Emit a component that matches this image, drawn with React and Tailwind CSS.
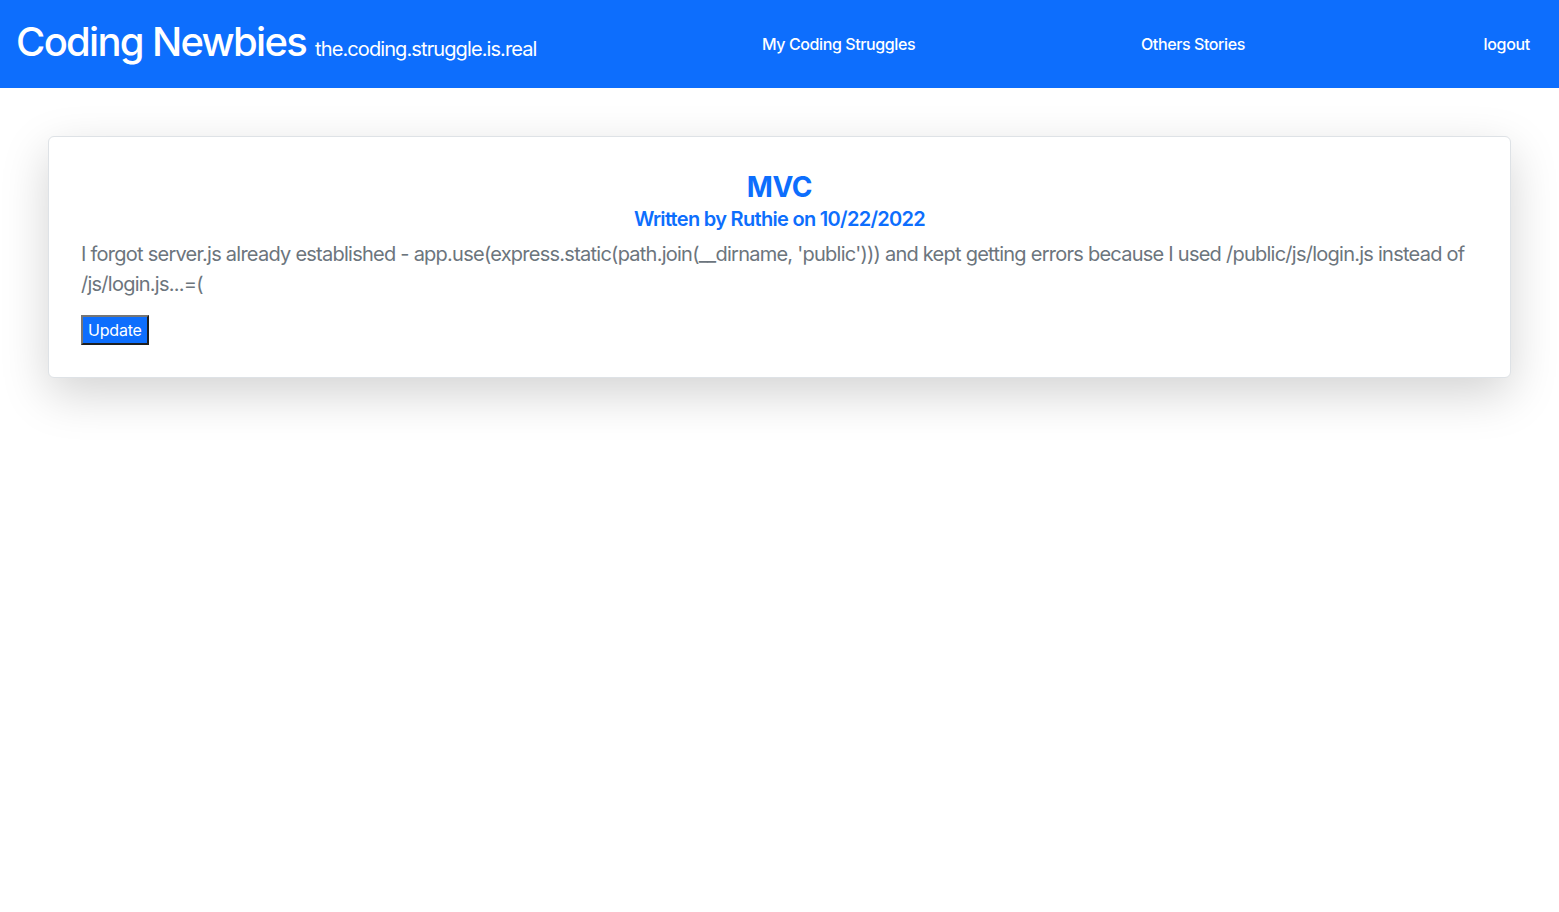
export default function App() {
  return (
    <div className="min-h-screen bg-white font-['Inter','Noto_Sans',sans-serif]">
      {/* Header */}
      <header className="h-[88px] bg-[#0d6efd] text-white flex items-center pl-4 pr-[29px]">
        <div className="w-[746px] pb-[5px] flex items-baseline gap-[9px] shrink-0">
          <h1 className="text-[40px] font-medium leading-tight tracking-[-1.7px]">Coding Newbies</h1>
          <span className="text-[20px] tracking-[-0.9px]">the.coding.struggle.is.real</span>
        </div>
        <nav className="flex-1 flex items-center text-[16px] font-medium">
          <a className="w-[379px] shrink-0 tracking-[-0.4px]">My Coding Struggles</a>
          <a className="tracking-[-0.4px]">Others Stories</a>
          <a className="ml-auto tracking-[-0.3px]">logout</a>
        </nav>
      </header>

      {/* Post */}
      <main className="px-12 pt-12">
        <div className="bg-white border border-[#dee2e6] rounded-md shadow-[0_1rem_3rem_rgba(0,0,0,0.175)] p-8">
          <h3 className="mt-[2px] text-center text-[28px] font-bold leading-[1.2] text-[#0d6efd] tracking-[-0.4px]">MVC</h3>
          <p className="mt-[2px] text-center text-[20px] font-semibold leading-[1.2] text-[#0d6efd] tracking-[-0.7px]">
            Written by Ruthie on 10/22/2022
          </p>
          <p className="mt-2 text-[20px] leading-[1.5] text-[#6c757d] tracking-[-0.75px]">
            I forgot server.js already established - app.use(express.static(path.join(__dirname, 'public'))) and kept
            getting errors because I used /public/js/login.js instead of /js/login.js...=(
          </p>
          <button className="mt-4 h-[30px] px-[5px] bg-[#0d6efd] text-white text-[16px] tracking-[-0.2px] border-2 border-t-[#767676] border-l-[#767676] border-r-[#1f1f1f] border-b-[#1f1f1f]">
            Update
          </button>
        </div>
      </main>
    </div>
  )
}
